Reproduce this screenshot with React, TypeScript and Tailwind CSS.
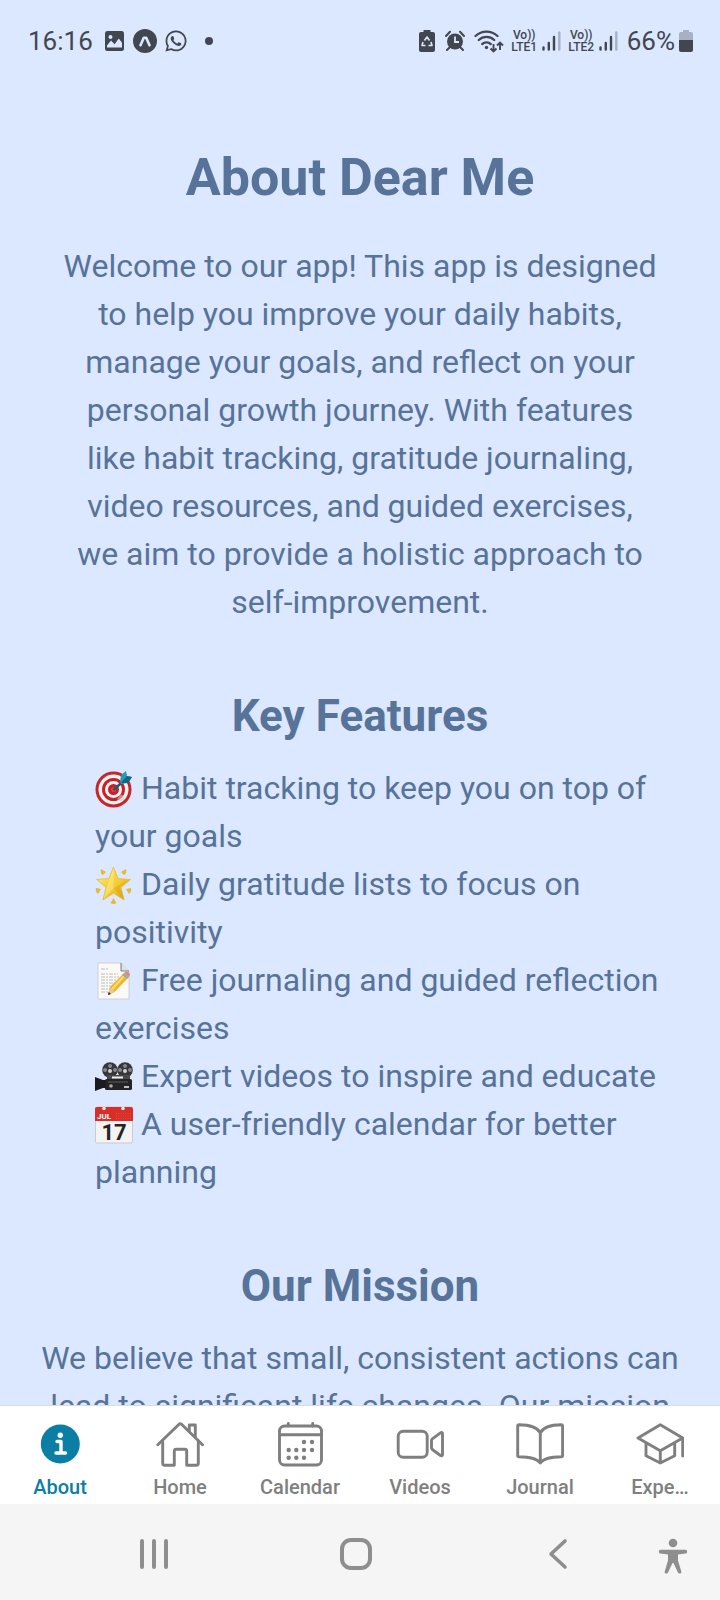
import type { ReactNode } from "react";
import { FaWhatsapp } from "react-icons/fa";

function StatusBar() {
  return (
    <header className="flex h-20 shrink-0 items-center justify-between pt-0.5 pr-[27px] pl-7 text-[26px] leading-8 text-[#42474f]">
      <div className="flex items-center">
        <span className="w-[77px]">16:16</span>
        <svg className="h-5 w-[19px]" viewBox="0 0 19 20" aria-hidden="true">
          <rect width="19" height="20" rx="2.5" fill="currentColor" />
          <circle cx="5.5" cy="6" r="2" fill="#dce8ff" />
          <path d="M2 14.5 6 9.5l3.6 3.7 4.2-5.6 3.2 4.2v4.7H2z" fill="#dce8ff" />
        </svg>
        <svg className="ml-[9px] size-6" viewBox="0 0 24 24" aria-hidden="true">
          <circle cx="12" cy="12" r="12" fill="currentColor" />
          <path d="M7.5 16.3 10.8 8.700h2.400l3.300 7.600" fill="none" stroke="#dce8ff" strokeWidth="2.600" strokeLinecap="round" strokeLinejoin="round" />
        </svg>
        <FaWhatsapp className="ml-[7px] size-6" aria-hidden="true" />
        <span className="ml-[17px] size-2 rounded-full bg-[#42474f]" />
      </div>
      <div className="flex items-center">
        <svg className="h-[22px] w-4" viewBox="0 0 16 22" aria-hidden="true">
          <path d="M4.500 0h7v2H14a2 2 0 0 1 2 2v16a2 2 0 0 1-2 2H2a2 2 0 0 1-2-2V4a2 2 0 0 1 2-2h2.500z" fill="currentColor" />
          <path d="M5.500 10.500 8 7l2.500 3.500M12 12l1 3.500H9.500M6.500 15.500H3L4 12" fill="none" stroke="#dce8ff" strokeWidth="1.600" strokeLinejoin="round" />
        </svg>
        <svg className="ml-[10px] h-[22px] w-5" viewBox="0 0 20 22" aria-hidden="true">
          <circle cx="10" cy="11.500" r="8" fill="currentColor" />
          <path d="M1 6 5 1.800M19 6l-4-4.200M4.500 17.500 2 20M15.500 17.500 18 20" stroke="currentColor" strokeWidth="2" strokeLinecap="round" />
          <path d="M10 6.500v5.500h4" fill="none" stroke="#dce8ff" strokeWidth="1.800" />
        </svg>
        <svg className="ml-[9px] h-6 w-[30px]" viewBox="0 0 30 24" fill="none" stroke="currentColor" aria-hidden="true">
          <path d="M1.500 7a16 16 0 0 1 22 0M4.800 11a11 11 0 0 1 15.400 0M8.300 15a6.500 6.500 0 0 1 8.400 0" strokeWidth="2.300" strokeLinecap="round" />
          <circle cx="12.500" cy="18.500" r="1.700" fill="currentColor" stroke="none" />
          <path d="M19.500 15v7M16.500 19.500l3 3 3-3M26 21v-7M23 16.500l3-3 3 3" strokeWidth="1.900" />
        </svg>
        <Network label="LTE1" />
        <Network label="LTE2" />
        <span className="ml-[9px]">66%</span>
        <svg className="ml-1 h-[22px] w-[14px]" viewBox="0 0 14 22" aria-hidden="true">
          <path d="M4 0h6v2h2a2 2 0 0 1 2 2v6H0V4a2 2 0 0 1 2-2h2z" fill="#a7b0c4" />
          <path d="M0 10h14v10a2 2 0 0 1-2 2H2a2 2 0 0 1-2-2z" fill="currentColor" />
        </svg>
      </div>
    </header>
  );
}

function Network({ label }: { label: string }) {
  return (
    <div className="ml-[7px] flex items-center gap-1">
      <div className="w-[27px] text-center text-[12px] leading-[12px] font-medium">
        <div>Vo))</div>
        <div>{label}</div>
      </div>
      <svg className="h-5 w-[19px]" viewBox="0 0 19 20" stroke="currentColor" strokeWidth="2.400" strokeLinecap="round" aria-hidden="true">
        <path d="M1.500 16.500v2M6.800 12v6.500M12 6v12.500" />
        <path d="M17.300 1.500v17" stroke="#a7b0c4" />
      </svg>
    </div>
  );
}

function Emoji({ children }: { children: ReactNode }) {
  return (
    <svg className="mr-2 inline-block h-[38px] w-[38px] align-[-9px]" viewBox="0 0 38 38" aria-hidden="true">
      {children}
    </svg>
  );
}

function Target() {
  return (
    <Emoji>
      <circle cx="18.500" cy="19.500" r="18" fill="#c4262c" />
      <circle cx="18.500" cy="19.500" r="15" fill="#f7f5f3" />
      <circle cx="18.500" cy="19.500" r="11.500" fill="#c91f28" />
      <circle cx="18.500" cy="19.500" r="8.500" fill="#f7f5f3" />
      <circle cx="18.500" cy="19.500" r="5.500" fill="#c91f28" />
      <circle cx="18.500" cy="19.500" r="2.500" fill="#ef3a35" />
      <path d="m22 29 4 3 4-4-4-4z" fill="#cfc9c4" opacity=".6" />
      <path d="M19 19.500 30 9.500" stroke="#175f7b" strokeWidth="2.400" strokeLinecap="round" />
      <path d="m25 12 1-7 5-4 1 5 5 1-4 6-7 1z" fill="#239bb5" />
      <path d="m26 13 6-7 5 1-4 6z" fill="#126783" />
    </Emoji>
  );
}

function Star() {
  return (
    <Emoji>
      <defs>
        <linearGradient id="gold" x1="0" y1="0" x2="1" y2="1">
          <stop stopColor="#ffed79" />
          <stop offset=".55" stopColor="#f5cb32" />
          <stop offset="1" stopColor="#d99913" />
        </linearGradient>
      </defs>
      <path d="m18.500 1 4.700 11.500 12.300 1-9.500 8 3.200 12.500-10.700-6.800L7.800 34 11 21.500l-9.500-8 12.300-1z" fill="url(#gold)" stroke="#e8b92b" strokeWidth=".7" strokeLinejoin="round" />
      <path d="m18.500 2 .2 20L8.500 33 12 21z" fill="#fff19b" opacity=".45" />
      <path d="m18.700 22 10 11-4-12 9-7z" fill="#cf8d12" opacity=".25" />
      <path d="m6 3 5 3-3 3q-3-1-2-6M31 3l-5 3 3 3q3-1 2-6M1 22l5 1-3 5q-3-2-2-6M36 22l-5 1 3 5q3-2 2-6M18.500 32l3 5q-3 2-6 0z" fill="#e7b934" />
    </Emoji>
  );
}

function Memo() {
  return (
    <Emoji>
      <path d="M3 1h23l8 8v28H3z" fill="#faf9f6" stroke="#c8c9ca" strokeWidth=".8" />
      <path d="M26 1v8h8" fill="#e1e1df" stroke="#77797b" strokeWidth="1" />
      <path d="M6 7h8M6 12h17M6 15h18M6 18h16M6 21h14M6 24h11M6 27h9M6 30h8" stroke="#b4b5b7" strokeWidth=".9" strokeDasharray="4 1 2 1" />
      <path d="m13 33 2-8L29 11l5 4-14.500 15z" fill="#edb52d" />
      <path d="m16.500 26 13-14 2 1-13.500 15z" fill="#ffda66" />
      <path d="m13 33 2-8 5 5z" fill="#e9c79b" />
      <path d="m13 33 .7-3 2.300 2z" fill="#222" />
      <path d="m27 13 2-2 5 4-2 2z" fill="#a6a7a9" />
      <path d="m29 11 2-1.500q3 0 4 3L34 15z" fill="#d88986" />
    </Emoji>
  );
}

function Projector() {
  return (
    <Emoji>
      <circle cx="15" cy="12" r="7.800" fill="#37373a" />
      <circle cx="30" cy="12" r="7.800" fill="#37373a" />
      <g fill="#858589">
        <path d="M15 6a2 2 0 1 0 .1 0M10 10a2 2 0 1 0 .1 0M20 10a2 2 0 1 0 .1 0M30 6a2 2 0 1 0 .1 0M25 10a2 2 0 1 0 .1 0M35 10a2 2 0 1 0 .1 0" />
      </g>
      <circle cx="15" cy="13" r="2" fill="#d3d3d4" />
      <circle cx="30" cy="13" r="2" fill="#d3d3d4" />
      <path d="M12 17h23v5H12z" fill="#49494c" />
      <path d="M17 18.500h11v2H17z" fill="#ededee" />
      <rect x="10" y="21" width="27" height="11" rx="1.500" fill="#242427" />
      <path d="M0 19 8 22h3v8H8l-8 3z" fill="#1b1b1d" />
      <path d="M13 24h20" stroke="#5d5d61" strokeWidth="1" />
      <circle cx="16" cy="28" r="1.800" fill="#aaa" />
      <path d="M29 29h5" stroke="#f4f4f4" strokeWidth="1.500" />
    </Emoji>
  );
}

function DatePage() {
  return (
    <Emoji>
      <rect x=".5" y="1" width="37" height="36" rx="1.500" fill="#f3f3f2" stroke="#bdbdbd" strokeWidth=".7" />
      <path d="M0 15V3q0-2 2-2h34q2 0 2 2v12z" fill="#d92e27" />
      <circle cx="9" cy="2.500" r="1.800" fill="#f6e9e5" />
      <circle cx="28" cy="2.500" r="1.800" fill="#f6e9e5" />
      <path d="M21 7.500h15M21 10h15M21 12.500h15" stroke="#e9564e" strokeWidth=".8" strokeDasharray="1 1.300" />
      <text x="2" y="13" fill="#fff" fontSize="8" fontWeight="700">JUL</text>
      <text x="19" y="34" fill="#242424" fontSize="22" fontWeight="700" textAnchor="middle">17</text>
    </Emoji>
  );
}

const features = [
  { icon: <Target />, text: "Habit tracking to keep you on top of your goals" },
  { icon: <Star />, text: "Daily gratitude lists to focus on positivity" },
  { icon: <Memo />, text: "Free journaling and guided reflection exercises" },
  { icon: <Projector />, text: "Expert videos to inspire and educate" },
  { icon: <DatePage />, text: "A user-friendly calendar for better planning" },
];

const tabs = [
  {
    label: "About",
    icon: (
      <>
        <circle cx="24.300" cy="24" r="19.500" fill="currentColor" stroke="none" />
        <circle cx="24.300" cy="15.300" r="2.700" fill="#fff" stroke="none" />
        <path d="M21 21.500h4v11M20 33h9.500" stroke="#fff" strokeWidth="3.400" />
      </>
    ),
  },
  {
    label: "Home",
    icon: (
      <>
        <path d="M1.800 24.700 22.800 4.500q1.500-1.500 3 0l20.700 20.200M33.300 11V5h6v12" />
        <path d="M6.700 21v22.300q0 2 2 2h9.600v-14q0-2 2-2h8.400q2 0 2 2v14h9.600q2 0 2-2V21" />
      </>
    ),
  },
  {
    label: "Calendar",
    icon: (
      <>
        <rect x="3.500" y="6" width="42" height="39" rx="5" />
        <path d="M3.500 14.700h42M12.300 6V3.500M36.700 6V3.500" />
        <path d="M28 22h.01M36 22h.01M12.700 30h.01M20.300 30h.01M28 30h.01M36 30h.01M12.700 37.700h.01M20.300 37.700h.01M28 37.700h.01" strokeWidth="4.400" />
      </>
    ),
  },
  {
    label: "Videos",
    icon: (
      <>
        <rect x="2.200" y="11.300" width="29" height="26" rx="5" />
        <path d="M35.500 20.500q0-1 .8-1.700l8.200-6q2-1 2 1v20.700q0 2-2 1l-8.200-6q-.8-.7-.8-1.700z" />
      </>
    ),
  },
  {
    label: "Journal",
    icon: (
      <path d="M24.300 12.700Q20 5 3 4.800q-1.300 0-1.300 1.300v29.400q0 1.300 1.300 1.300Q20 37 24.300 43q4.200-6 21-6.200 1.300 0 1.300-1.300V6.100q0-1.300-1.300-1.300Q28.500 5 24.300 12.700V43" />
    ),
  },
  {
    label: "Expe…",
    icon: (
      <path d="M24.300 4.700 2 18l22.300 12.700L46.700 18zM46.700 18v18M10 23v12.700L24.300 43l14.400-7.300V23M24.300 30.700V43" />
    ),
  },
];

function TabBar() {
  return (
    <nav aria-label="Main" className="grid shrink-0 grid-cols-6 border-t border-[#d8dce4] bg-white pt-[14px] pb-[5px]">
      {tabs.map((tab, index) => (
        <a
          key={tab.label}
          href={"#" + tab.label.toLowerCase()}
          aria-current={index === 0 ? "page" : undefined}
          className={"flex flex-col items-center gap-[7px] text-[20px] leading-6 font-medium " + (index === 0 ? "text-[#0a7ea4]" : "text-[#7f7f7f]")}
        >
          <svg className="size-12" viewBox="0 0 48 48" fill="none" stroke="currentColor" strokeWidth="2.900" strokeLinecap="round" strokeLinejoin="round" aria-hidden="true">
            {tab.icon}
          </svg>
          {tab.label}
        </a>
      ))}
    </nav>
  );
}

function SystemBar() {
  return (
    <footer className="flex h-24 shrink-0 items-center bg-[#f5f5f5] pt-1 pr-8 pl-[106px] text-[#8e8e8e]">
      <div className="flex flex-1 justify-between">
        <button type="button" aria-label="Recent apps" className="flex h-12 w-24 items-center justify-center gap-2">
          <span className="h-[30px] w-1 rounded-full bg-current" />
          <span className="h-[30px] w-1 rounded-full bg-current" />
          <span className="h-[30px] w-1 rounded-full bg-current" />
        </button>
        <button type="button" aria-label="Home screen" className="flex h-12 w-24 items-center justify-center">
          <span className="size-8 rounded-[11px] border-4 border-current" />
        </button>
        <button type="button" aria-label="Back" className="flex h-12 w-24 items-center justify-center">
          <svg className="h-8 w-5" viewBox="0 0 20 32" fill="none" stroke="currentColor" strokeWidth="3.600" strokeLinecap="round" strokeLinejoin="round">
            <path d="M17 3 3 16l14 13" />
          </svg>
        </button>
      </div>
      <button type="button" aria-label="Accessibility" className="ml-[52px] pt-1">
        <svg className="h-9 w-[30px]" viewBox="0 0 30 36" fill="currentColor">
          <circle cx="15" cy="5" r="4.300" />
          <path d="M2.500 11.800h25q1.700 0 1.700 1.900t-1.700 1.900l-7.500.8v6l3.300 11q.4 1.800-1.200 2.100-1.700.3-2.300-1.300L15.500 25h-1l-4.300 9.200q-.6 1.600-2.300 1.300-1.600-.3-1.200-2.100l3.300-11v-6l-7.500-.8Q.8 15.600.8 13.700t1.700-1.900z" />
        </svg>
      </button>
    </footer>
  );
}

export default function App() {
  return (
    <div className="flex h-screen flex-col bg-[#dce8ff] font-['Roboto',sans-serif]">
      <StatusBar />
      <main className="min-h-0 flex-1 overflow-y-auto px-10 pt-[66px] text-[32px] leading-[48px] text-[#577399] [scrollbar-width:none]">
        <h1 className="text-center text-[52px] leading-[64px] font-bold">About Dear Me</h1>
        <p className="mt-8 px-5 text-center">
          Welcome to our app! This app is designed to help you improve your daily habits, manage your goals, and reflect on your personal growth journey. With features like habit tracking, gratitude journaling, video resources, and guided exercises, <span className="whitespace-nowrap">we aim</span> to provide a holistic approach to <span className="whitespace-nowrap">self-improvement.</span>
        </p>
        <section className="mt-16">
          <h2 className="text-center text-[44px] leading-[52px] font-bold">Key Features</h2>
          <ul className="mt-[22px] pr-5 pl-[55px]">
            {features.map((feature) => (
              <li key={feature.text}>
                {feature.icon}
                {feature.text}
              </li>
            ))}
          </ul>
        </section>
        <section className="mt-16">
          <h2 className="text-center text-[44px] leading-[52px] font-bold">Our Mission</h2>
          <p className="-mx-2 mt-[22px] text-center">
            We believe that small, consistent actions can lead to significant life changes. Our mission
          </p>
        </section>
      </main>
      <TabBar />
      <SystemBar />
    </div>
  );
}
